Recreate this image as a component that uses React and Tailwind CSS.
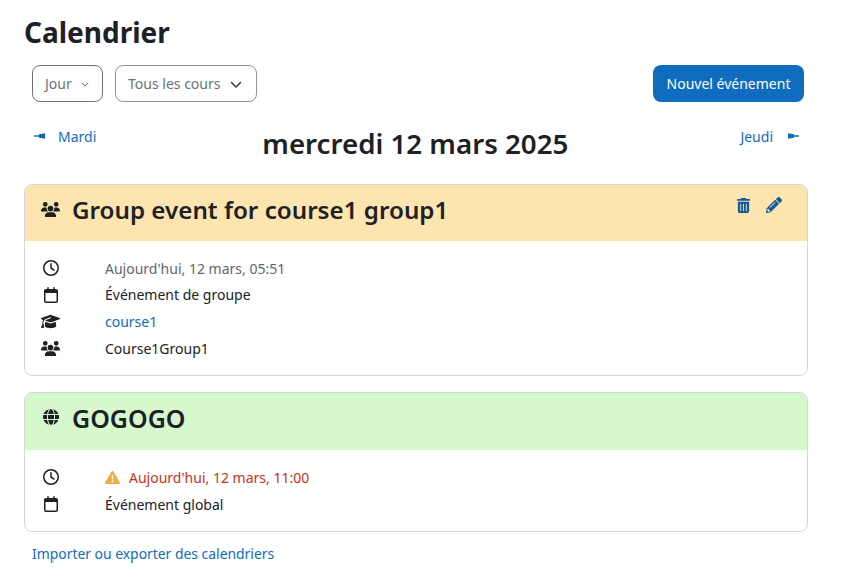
import React from 'react';
import { FaUsers, FaRegClock, FaRegCalendar, FaGraduationCap, FaGlobe, FaTrashCan, FaTriangleExclamation, FaChevronDown } from 'react-icons/fa6';
import { FaPencilAlt } from 'react-icons/fa';

const LeftArrow = () => (
  <svg width="12" height="6" viewBox="0 0 12 6" className="text-[#0f6cbf]" fill="currentColor">
    <path d="M0 2.300h5V1.200l6-1v5.600l-6-1V3.700H0z" />
  </svg>
);

const RightArrow = () => (
  <svg width="12" height="6" viewBox="0 0 12 6" className="text-[#0f6cbf]" fill="currentColor">
    <path d="M12 2.300H7V1.200l-6-1v5.600l6-1V3.700h5z" />
  </svg>
);

const Row = ({ icon, children }) => (
  <div className="flex items-center h-[26.67px]">
    <div className="w-[64px] text-[#1d2125] text-[16px]">
      <span className="w-[19px] flex justify-center">{icon}</span>
    </div>
    <div className="text-[14px] text-[#1d2125]">{children}</div>
  </div>
);

const EventCard = ({ bg, icon, title, titleSize, actions, children, headerHeight }) => (
  <div className="border border-[#d5d6d8] rounded-lg overflow-hidden w-[784px]">
    <div className={`${bg} ${headerHeight} flex items-start pl-[16px] pr-[25px]`}>
      <span className="w-[31px] h-[48px] flex items-center text-[#1d2125] text-[19px]">{icon}</span>
      <h2 className={`${titleSize} font-semibold text-[#1d2125] leading-[50px]`}>{title}</h2>
      {actions}
    </div>
    <div className="pl-[16px] pt-[14px] pb-[13.5px]">{children}</div>
  </div>
);

export default function App() {
  return (
    <div className="w-[844px] h-[584px] overflow-hidden bg-white pl-[24px] pt-[12px] font-['Noto_Sans','Open_Sans',sans-serif]">
      <h1 className="text-[28px] font-bold text-[#1d2125] leading-[40px]">Calendrier</h1>

      <div className="flex items-center w-[780px] pl-[8px] mt-[13px]">
        <div className="w-[71px] h-[37px] border border-[#6a737b] rounded-lg flex items-center pl-[12px] gap-[9px] text-[14px] text-[#6a737b]">
          Jour
          <FaChevronDown className="text-[8px]" />
        </div>
        <div className="ml-[12px] w-[142px] h-[37px] border border-[#8f959e] rounded-lg flex items-center pl-[12px] gap-[10px] text-[14px] text-[#6a737b]">
          Tous les cours
          <FaChevronDown className="text-[12px] text-[#343a40]" />
        </div>
        <button className="ml-auto w-[151px] h-[37px] bg-[#0f6cbf] rounded-lg text-white text-[14px]">Nouvel événement</button>
      </div>

      <div className="flex justify-between w-[780px] pl-[10px] pr-[5px] mt-[13px] h-[69px]">
        <a className="flex items-center gap-[12px] h-[18px] mt-[12px] text-[14px] text-[#0f6cbf]"><LeftArrow />Mardi</a>
        <div className="text-[27.7px] font-semibold text-[#1d2125] leading-[40px] mt-[8px] mr-[6px]">mercredi 12 mars 2025</div>
        <a className="flex items-center gap-[14px] h-[18px] mt-[12px] text-[14px] text-[#0f6cbf]">Jeudi<RightArrow /></a>
      </div>

      <EventCard
        bg="bg-[#fde5b0]"
        headerHeight="h-[56px]"
        icon={<FaUsers />}
        title="Group event for course1 group1"
        titleSize="text-[24.2px]"
        actions={
          <div className="ml-auto flex items-center gap-[15px] h-[40px] text-[#115a9b]">
            <FaTrashCan className="text-[15px]" />
            <FaPencilAlt className="text-[16px]" />
          </div>
        }
      >
        <Row icon={<FaRegClock />}><span className="text-[#5e6670]">Aujourd'hui, 12 mars, 05:51</span></Row>
        <Row icon={<FaRegCalendar />}>Événement de groupe</Row>
        <Row icon={<FaGraduationCap className="text-[19px]" />}><a className="text-[#0f6cbf]">course1</a></Row>
        <Row icon={<FaUsers className="text-[19px]" />}>Course1Group1</Row>
      </EventCard>

      <div className="mt-[16px]">
        <EventCard
          bg="bg-[#d6f8cd]"
          headerHeight="h-[57px]"
          icon={<FaGlobe className="text-[16px] ml-[2px]" />}
          title="GOGOGO"
          titleSize="text-[25px]"
        >
          <Row icon={<FaRegClock />}>
            <span className="flex items-center gap-[9px] text-[#ca3120]">
              <FaTriangleExclamation className="text-[15px] text-[#f0ad4e]" />
              Aujourd'hui, 12 mars, 11:00
            </span>
          </Row>
          <Row icon={<FaRegCalendar />}>Événement global</Row>
        </EventCard>
      </div>

      <a className="block ml-[8px] mt-[12px] text-[13.9px] text-[#0f6cbf]">Importer ou exporter des calendriers</a>
    </div>
  );
}
